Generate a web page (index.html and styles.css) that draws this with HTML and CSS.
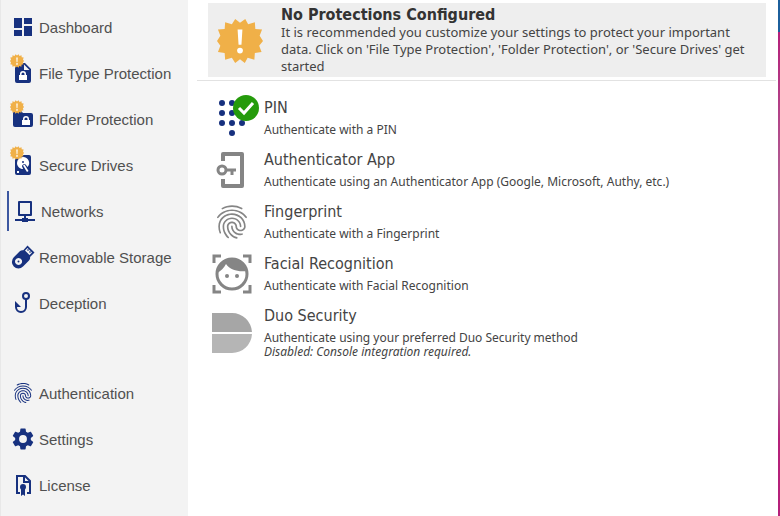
FILE: index.html
```html
<!DOCTYPE html>
<html lang="en">
  <head>
    <meta charset="UTF-8" />
    <meta name="viewport" content="width=device-width, initial-scale=1.0" />
    <title>Authentication</title>
    <link rel="stylesheet" href="styles.css" />
  </head>
  <body>
    <svg class="symbols" aria-hidden="true">
      <symbol id="fingerprint" viewBox="0 0 24 24">
        <path d="M17.81 4.47c-.08 0-.16-.02-.23-.06C15.66 3.42 14 3 12.01 3c-1.98 0-3.86.47-5.57 1.41-.24.13-.54.04-.68-.2-.13-.24-.04-.55.2-.68C7.82 2.52 9.86 2 12.01 2c2.13 0 3.99.47 6.03 1.52.25.13.34.43.21.67-.09.18-.26.28-.44.28zM3.5 9.72c-.1 0-.2-.03-.29-.09-.23-.16-.28-.47-.12-.7.99-1.4 2.25-2.5 3.75-3.27C9.98 4.04 14 4.03 17.15 5.65c1.5.77 2.76 1.86 3.75 3.25.16.22.11.54-.12.7-.23.16-.54.11-.7-.12-.9-1.26-2.04-2.25-3.39-2.94-2.87-1.47-6.54-1.47-9.4.01-1.36.7-2.5 1.7-3.4 2.96-.08.14-.23.21-.39.21zm6.25 12.07c-.13 0-.26-.05-.35-.15-.87-.87-1.34-1.43-2.01-2.64-.69-1.23-1.05-2.73-1.05-4.34 0-2.97 2.54-5.39 5.66-5.39s5.66 2.42 5.66 5.39c0 .28-.22.5-.5.5s-.5-.22-.5-.5c0-2.42-2.09-4.39-4.66-4.39-2.57 0-4.66 1.97-4.66 4.39 0 1.44.32 2.77.93 3.85.64 1.15 1.08 1.64 1.85 2.42.19.2.19.51 0 .71-.11.1-.24.15-.37.15zm7.17-1.85c-1.19 0-2.24-.3-3.1-.89-1.49-1.01-2.38-2.65-2.38-4.39 0-.28.22-.5.5-.5s.5.22.5.5c0 1.41.72 2.74 1.94 3.56.71.48 1.54.71 2.54.71.24 0 .64-.03 1.04-.1.27-.05.53.13.58.41.05.27-.13.53-.41.58-.57.11-1.07.12-1.21.12zM14.91 22c-.04 0-.09-.01-.13-.02-1.59-.44-2.63-1.03-3.72-2.1-1.4-1.39-2.17-3.24-2.17-5.22 0-1.62 1.38-2.94 3.08-2.94 1.7 0 3.08 1.32 3.08 2.94 0 1.07.93 1.94 2.08 1.94s2.08-.87 2.08-1.94c0-3.77-3.25-6.83-7.25-6.83-2.84 0-5.44 1.58-6.61 4.03-.39.81-.59 1.76-.59 2.8 0 .78.07 2.01.67 3.61.1.26-.03.55-.29.64-.26.1-.55-.04-.64-.29-.49-1.31-.73-2.61-.73-3.96 0-1.2.23-2.29.68-3.24 1.33-2.79 4.28-4.6 7.51-4.6 4.55 0 8.25 3.51 8.25 7.83 0 1.62-1.38 2.94-3.08 2.94s-3.08-1.32-3.08-2.94c0-1.07-.93-1.94-2.08-1.94s-2.08.87-2.08 1.94c0 1.71.66 3.31 1.87 4.51.95.94 1.86 1.46 3.27 1.85.27.07.42.35.35.61-.05.23-.26.38-.47.38z" />
      </symbol>
      <symbol id="alert" viewBox="0 0 48 48">
        <path fill="#f0b048" d="M24 5l5.500-4 3 5.500 7-2 .5 7 7 .5-2.500 6.500 3.500 5.500-4 5 2.500 6.500-7 1-.5 7-7-2L29 47l-5-4-5 4-3.500-5.500-7 2-.5-7-7-1 2.500-6.500-3.500-5 3.500-5.500L1 12l7-.5.5-7 7 2L19 1z" />
        <path fill="#fff" d="M21.500 12h5l-1 16h-3z" />
        <circle cx="24" cy="34" r="3" fill="#fff" />
      </symbol>
    </svg>

    <div class="app">
      <nav class="sidebar">
        <a class="nav-item" href="#dashboard">
          <span class="nav-icon">
            <svg viewBox="0 0 24 24"><path d="M3 13h8V3H3zm0 8h8v-6H3zm10 0h8V11h-8zm0-18v6h8V3z" /></svg>
          </span>
          Dashboard
        </a>
        <a class="nav-item" href="#files">
          <span class="nav-icon">
            <svg viewBox="0 0 24 24">
              <path fill-rule="evenodd" d="M6 2h8l6 6v12a2 2 0 0 1-2 2H6a2 2 0 0 1-2-2V4a2 2 0 0 1 2-2zm7 1.500V9h5.500z" />
              <path fill="#fff" fill-rule="evenodd" d="M8 14h1v-1a3 3 0 0 1 6 0v1h1v5H8zm2.500 0h3v-1a1.500 1.500 0 0 0-3 0z" />
            </svg>
            <svg class="nav-alert"><use href="#alert" /></svg>
          </span>
          File Type Protection
        </a>
        <a class="nav-item" href="#folders">
          <span class="nav-icon">
            <svg viewBox="0 0 24 24">
              <path d="M4 4h6l2 2h8a2 2 0 0 1 2 2v10a2 2 0 0 1-2 2H4a2 2 0 0 1-2-2V6a2 2 0 0 1 2-2z" />
              <path fill="#fff" fill-rule="evenodd" d="M11 13h1v-1a3 3 0 0 1 6 0v1h1v5h-8zm2.500 0h3v-1a1.500 1.500 0 0 0-3 0z" />
            </svg>
            <svg class="nav-alert"><use href="#alert" /></svg>
          </span>
          Folder Protection
        </a>
        <a class="nav-item" href="#drives">
          <span class="nav-icon">
            <svg viewBox="0 0 24 24">
              <path d="M6 2h12a2 2 0 0 1 2 2v16a2 2 0 0 1-2 2H6a2 2 0 0 1-2-2V4a2 2 0 0 1 2-2z" />
              <path fill="#fff" d="M12 4a6 6 0 0 0-6 6c0 3.300 2.700 6 6.100 6l-.9-2.200c-.4-.8-.1-1.700.7-2.100l.8-.5c.8-.4 1.700-.1 2.100.6l1.700 2.300A6 6 0 0 0 12 4zM6 18h2v2H6z" />
              <circle cx="12" cy="9" r="1" />
              <path fill="#fff" d="M12 12.500l1.500-1 4 6.500-1.500 1z" />
            </svg>
            <svg class="nav-alert"><use href="#alert" /></svg>
          </span>
          Secure Drives
        </a>
        <a class="nav-item active" href="#networks">
          <span class="nav-icon">
            <svg viewBox="0 0 24 24">
              <path fill-rule="evenodd" d="M6 2h12a1 1 0 0 1 1 1v13a1 1 0 0 1-1 1h-5v2h2v1h7v2h-7v1H9v-1H2v-2h7v-1h2v-2H6a1 1 0 0 1-1-1V3a1 1 0 0 1 1-1zm1 2v11h10V4z" />
            </svg>
          </span>
          Networks
        </a>
        <a class="nav-item" href="#removable">
          <span class="nav-icon">
            <svg viewBox="0 0 24 24">
              <path fill-rule="evenodd" d="M16.500 0.500l7 7-4.500 4.500c.4 1.300 0 2.500-1 3.500l-6 6a6.500 6.500 0 0 1-9.200-9.200l6-6c1-1 2.200-1.300 3.500-1zm0 2.500l-2.500 2.500 4.500 4.500L21 7.500zM7.500 13a3.500 3.500 0 1 0 .1 0z" />
              <circle cx="7.500" cy="16.500" r="1" />
              <path d="M16 5l1-1 1 1-1 1zm2 2l1-1 1 1-1 1z" />
            </svg>
          </span>
          Removable Storage
        </a>
        <a class="nav-item" href="#deception">
          <span class="nav-icon">
            <svg viewBox="0 0 24 24">
              <g fill="none" stroke="#17317f" stroke-width="2">
                <circle cx="15" cy="5" r="3" />
                <path d="M15 8v8a5 5 0 0 1-10 0v-4" />
              </g>
              <path d="M4 10l6 6H4z" />
            </svg>
          </span>
          Deception
        </a>

        <div class="nav-bottom">
          <a class="nav-item" href="#authentication">
            <span class="nav-icon"><svg><use href="#fingerprint" /></svg></span>
            Authentication
          </a>
          <a class="nav-item" href="#settings">
            <span class="nav-icon">
              <svg viewBox="1 1 22 22">
                <path d="M19.140 12.940c.04-.3.060-.61.060-.94 0-.32-.02-.64-.07-.94l2.030-1.580c.18-.14.230-.41.120-.61l-1.920-3.320c-.12-.22-.37-.29-.59-.22l-2.390.96c-.5-.38-1.030-.7-1.620-.94l-.36-2.540c-.04-.24-.24-.41-.48-.41h-3.840c-.24 0-.43.170-.47.410l-.36 2.540c-.59.240-1.130.570-1.620.940l-2.390-.96c-.22-.08-.47 0-.59.220L2.740 8.870c-.12.210-.08.470.120.610l2.030 1.580c-.05.3-.09.630-.09.940s.020.640.070.940l-2.030 1.580c-.18.140-.23.410-.12.610l1.920 3.320c.12.220.370.290.590.220l2.390-.96c.5.380 1.030.7 1.620.940l.36 2.540c.05.240.240.410.480.410h3.840c.24 0 .44-.17.470-.41l.36-2.540c.59-.24 1.130-.56 1.620-.94l2.390.96c.22.080.470 0 .59-.22l1.920-3.320c.12-.22.070-.47-.12-.61l-2.010-1.580zM12 15.600a3.600 3.600 0 1 1 0-7.200 3.600 3.600 0 0 1 0 7.200z" />
              </svg>
            </span>
            Settings
          </a>
          <a class="nav-item" href="#license">
            <span class="nav-icon">
              <svg viewBox="0 0 24 24">
                <path fill="none" stroke="#17317f" stroke-width="2" d="M9 20H6V3h8l5 5v12h-3M13 3v6h6" />
                <path d="M9 14a3 3 0 1 1 6 0c0 1-.5 2-1 2.500V23l-2-1.500-2 1.500v-6.500C9.500 16 9 15 9 14z" />
              </svg>
            </span>
            License
          </a>
        </div>
      </nav>

      <main class="content">
        <section class="banner">
          <svg class="banner-icon"><use href="#alert" /></svg>
          <div class="banner-text">
            <h1>No Protections Configured</h1>
            <p>It is recommended you customize your settings to protect your important data. Click on 'File Type Protection', 'Folder Protection', or 'Secure Drives' get started</p>
          </div>
        </section>

        <ul class="methods">
          <li class="method">
            <span class="method-icon">
              <svg viewBox="0 0 40 40">
                <g fill="#17317f">
                  <circle cx="10" cy="5" r="3" /><circle cx="20" cy="5" r="3" /><circle cx="30" cy="5" r="3" />
                  <circle cx="10" cy="15" r="3" /><circle cx="20" cy="15" r="3" /><circle cx="30" cy="15" r="3" />
                  <circle cx="10" cy="25" r="3" /><circle cx="20" cy="25" r="3" /><circle cx="30" cy="25" r="3" />
                  <circle cx="20" cy="35" r="3" />
                </g>
              </svg>
              <svg class="check" viewBox="0 0 26 26">
                <circle cx="13" cy="13" r="13" fill="#259b0b" />
                <path fill="none" stroke="#fff" stroke-width="3" d="M6 13l5 5L20 8" />
              </svg>
            </span>
            <div class="method-text">
              <h2>PIN</h2>
              <p>Authenticate with a PIN</p>
            </div>
          </li>
          <li class="method">
            <span class="method-icon">
              <svg viewBox="0 0 40 40">
                <g fill="none" stroke="#858585">
                  <path stroke-width="4" stroke-linejoin="round" d="M11 11V4h19v32H11v-7" />
                  <circle cx="10" cy="20" r="4" stroke-width="3" />
                  <path stroke-width="3" d="M14 20h10M20 20v5" />
                </g>
              </svg>
            </span>
            <div class="method-text">
              <h2>Authenticator App</h2>
              <p>Authenticate using an Authenticator App (Google, Microsoft, Authy, etc.)</p>
            </div>
          </li>
          <li class="method">
            <span class="method-icon"><svg><use href="#fingerprint" /></svg></span>
            <div class="method-text">
              <h2>Fingerprint</h2>
              <p>Authenticate with a Fingerprint</p>
            </div>
          </li>
          <li class="method">
            <span class="method-icon">
              <svg viewBox="0 0 40 40">
                <path fill="none" stroke="#858585" stroke-width="3" d="M2 9V2h7M31 2h7v7M38 31v7h-7M9 38H2v-7" />
                <circle cx="20" cy="20" r="15" fill="none" stroke="#858585" stroke-width="3" />
                <path d="M5 19C5 10 12 4 20 4s14 6 15 13c-9 1-17-1-21-7-2 4-5 7-9 9z" />
                <circle cx="15" cy="22" r="2" />
                <circle cx="25" cy="22" r="2" />
              </svg>
            </span>
            <div class="method-text">
              <h2>Facial Recognition</h2>
              <p>Authenticate with Facial Recognition</p>
            </div>
          </li>
          <li class="method">
            <span class="method-icon">
              <svg viewBox="0 0 40 40">
                <path fill="#a6a6a6" d="M0 0h20a20 20 0 0 1 20 19H0z" />
                <path fill="#b5b5b5" d="M0 21h40a20 20 0 0 1-20 19H0z" />
              </svg>
            </span>
            <div class="method-text">
              <h2>Duo Security</h2>
              <p>Authenticate using your preferred Duo Security method</p>
              <p><em>Disabled: Console integration required.</em></p>
            </div>
          </li>
        </ul>
      </main>
      <div class="edge"></div>
    </div>
  </body>
</html>
```
FILE: styles.css
```css
* {
  box-sizing: border-box;
}
body {
  margin: 0;
  background-color: #fff;
  color: #444;
  font-family: Tahoma, "DejaVu Sans Condensed", "Noto Sans", sans-serif;
}
h1,
h2,
p,
ul {
  margin: 0;
  padding: 0;
}
.symbols {
  display: none;
}
.app {
  display: flex;
  min-height: 100vh;
}

/* Sidebar */
.sidebar {
  flex: 0 0 188px;
  display: flex;
  flex-direction: column;
  gap: 6px;
  padding: 7px 0 8px 6px;
  background-color: #f3f3f3;
  border-left: 1px solid #e8e8e8;
  font-family: "Liberation Sans", Arial, sans-serif;
}
.nav-item {
  display: flex;
  align-items: center;
  gap: 4px;
  height: 40px;
  padding-left: 4px;
  color: #505050;
  font-size: 15px;
  text-decoration: none;
}
.nav-item.active {
  border-left: 2px solid #3c57a0;
}
.nav-icon {
  position: relative;
  flex: none;
  width: 24px;
  height: 24px;
}
.nav-icon svg {
  display: block;
  width: 24px;
  height: 24px;
  fill: #17317f;
}
.nav-icon .nav-alert {
  position: absolute;
  top: -7px;
  left: -1px;
  width: 14px;
  height: 14px;
}
.nav-bottom {
  display: flex;
  flex-direction: column;
  gap: 6px;
  margin-top: 44px;
}

/* Main panel */
.content {
  flex: 1;
  padding: 3px 2px 0 9px;
}
.banner {
  display: flex;
  align-items: center;
  gap: 18px;
  margin: 0 10px 0 11px;
  padding: 3px 10px 2px 9px;
  background-color: #eee;
}
.banner-icon {
  flex: none;
  width: 46px;
  height: 46px;
}
.banner h1 {
  color: #333;
  font-size: 16px;
  line-height: 18px;
}
.banner p {
  font-family: Tahoma, "Noto Sans", sans-serif;
  font-size: 13px;
  line-height: 17px;
}
.methods {
  display: flex;
  flex-direction: column;
  gap: 13px;
  margin-top: 3px;
  padding: 17px 0 0 15px;
  border-top: 1px solid #e2e2e2;
  list-style: none;
}
.method {
  display: flex;
  align-items: center;
  gap: 12px;
}
.method-icon {
  position: relative;
  flex: none;
  width: 40px;
  height: 39px;
}
.method-icon svg {
  display: block;
  width: 40px;
  height: 40px;
  fill: #858585;
}
.method-icon .check {
  position: absolute;
  top: -3px;
  left: 21px;
  width: 26px;
  height: 26px;
}
.method h2 {
  margin-bottom: 5px;
  font-size: 16px;
  font-weight: normal;
  line-height: 20px;
}
.method p {
  font-family: Tahoma, "Noto Sans", sans-serif;
  font-size: 12px;
  line-height: 14px;
}

/* Strip of desktop behind the window */
.edge {
  flex: 0 0 2px;
  background: linear-gradient(#1c5f9c 32px, #b5207a 32px, #b06a98 40%, #b06a98 75%, #b5207a 85%);
}
```
